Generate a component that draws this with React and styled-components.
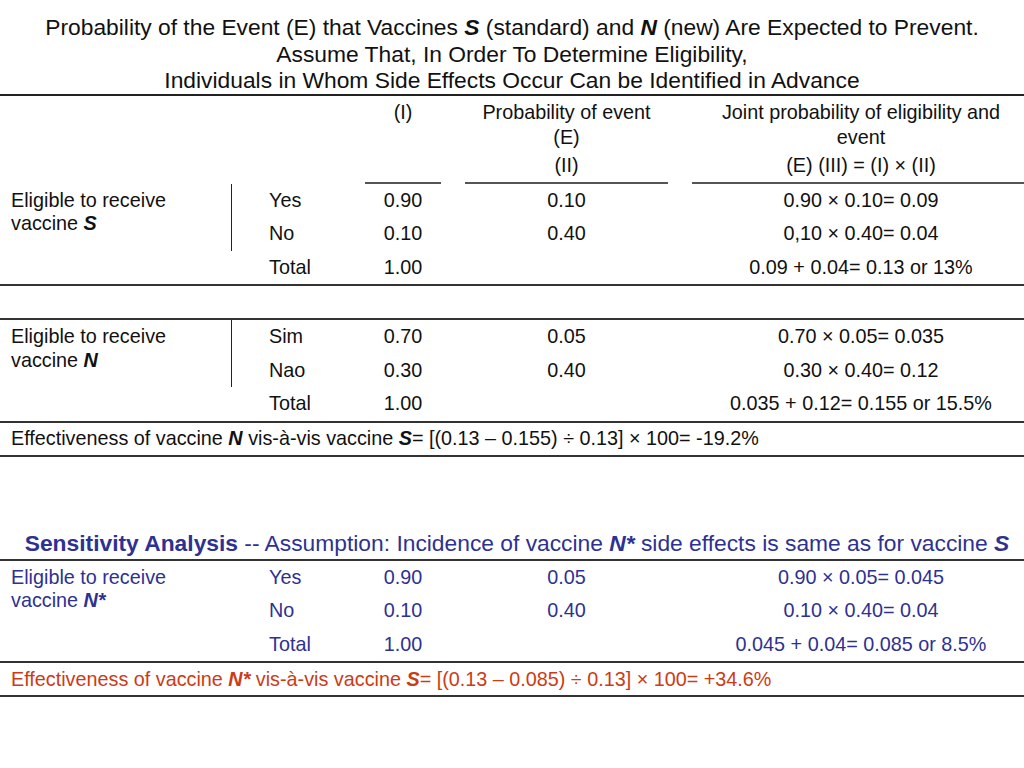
import styled, { createGlobalStyle } from 'styled-components';

const GlobalStyle = createGlobalStyle`
  body {
    margin: 0;
    background: #fff;
    font-family: 'Liberation Sans', Arial, sans-serif;
    color: #111;
  }
`;

const COLS = '232px 133px 76px 24px 203px 24px 1fr';
const BLUE = '#2e3192';
const RED = '#cc3b14';

const groups = [
  {
    label: 'S',
    divider: true,
    rows: [
      ['Yes', '0.90', '0.10', '0.90 × 0.10= 0.09'],
      ['No', '0.10', '0.40', '0,10 × 0.40= 0.04'],
      ['Total', '1.00', '', '0.09 + 0.04= 0.13 or 13%'],
    ],
  },
  {
    label: 'N',
    divider: true,
    rows: [
      ['Sim', '0.70', '0.05', '0.70 × 0.05= 0.035'],
      ['Nao', '0.30', '0.40', '0.30 × 0.40= 0.12'],
      ['Total', '1.00', '', '0.035 + 0.12= 0.155 or 15.5%'],
    ],
  },
];

const sensitivity = {
  label: 'N*',
  divider: false,
  rows: [
    ['Yes', '0.90', '0.05', '0.90 × 0.05= 0.045'],
    ['No', '0.10', '0.40', '0.10 × 0.40= 0.04'],
    ['Total', '1.00', '', '0.045 + 0.04= 0.085 or 8.5%'],
  ],
};

export default function App() {
  return (
    <>
      <GlobalStyle />
      <Page>
        <Title>
          Probability of the Event (E) that Vaccines <Em>S</Em> (standard) and <Em>N</Em> (new) Are
          Expected to Prevent.
          <br />
          Assume That, In Order To Determine Eligibility,
          <br />
          Individuals in Whom Side Effects Occur Can be Identified in Advance
        </Title>

        <HeaderGrid>
          <HeadCell $col={3}>
            <span>(I)</span>
          </HeadCell>
          <HeadCell $col={5}>
            <span>
              Probability of event
              <br />
              (E)
            </span>
            <Sub>(II)</Sub>
          </HeadCell>
          <HeadCell $col={7} $shift>
            <span>
              Joint probability of eligibility and
              <br />
              event
            </span>
            <Sub>(E) (III) = (I) × (II)</Sub>
          </HeadCell>
        </HeaderGrid>

        <Group data={groups[0]} />
        <Spacer />
        <Group data={groups[1]} />
        <EffectRow>
          Effectiveness of vaccine <Em>N</Em> vis-à-vis vaccine <Em>S</Em>= [(0.13 – 0.155) ÷ 0.13]
          × 100= -19.2%
        </EffectRow>

        <SensHeading>
          <b>Sensitivity Analysis</b> -- Assumption: Incidence of vaccine <Em>N*</Em> side effects
          is same as for vaccine <Em>S</Em>
        </SensHeading>
        <Group data={sensitivity} $tone={BLUE} />
        <EffectRow $tone={RED}>
          Effectiveness of vaccine <Em>N*</Em> vis-à-vis vaccine <Em>S</Em>= [(0.13 – 0.085) ÷
          0.13] × 100= +34.6%
        </EffectRow>
      </Page>
    </>
  );
}

function Group({ data, $tone }) {
  return (
    <GroupGrid $tone={$tone}>
      <Label $divider={data.divider}>
        Eligible to receive
        <br />
        vaccine <Em>{data.label}</Em>
      </Label>
      {data.rows.map((r, i) => (
        <Row key={i} row={r} index={i + 1} />
      ))}
    </GroupGrid>
  );
}

function Row({ row, index }) {
  const [name, p1, p2, joint] = row;
  return (
    <>
      <Name $row={index}>{name}</Name>
      <Num $row={index} $col={3}>{p1}</Num>
      <Num $row={index} $col={5}>{p2}</Num>
      <Num $row={index} $col={7} $shift>{joint}</Num>
    </>
  );
}

const Page = styled.div`
  width: 1024px;
  font-size: 19.8px;
`;

const Em = styled.b`
  font-style: italic;
  font-weight: bold;
`;

const Title = styled.h1`
  margin: 0;
  padding-top: 14px;
  padding-bottom: 0;
  font-size: 22.8px;
  font-weight: normal;
  line-height: 26.5px;
  text-align: center;
  color: #111;
  border-bottom: 2px solid #222;
`;

const HeaderGrid = styled.div`
  display: grid;
  grid-template-columns: ${COLS};
`;

const HeadCell = styled.div`
  grid-column: ${(p) => p.$col};
  display: flex;
  flex-direction: column;
  align-items: center;
  text-align: center;
  line-height: 25px;
  padding: 4.5px 0 3.5px ${(p) => (p.$shift ? '6px' : '0')};
  border-bottom: 2px solid #555;
`;

const Sub = styled.span`
  margin-top: 3px;
`;

const GroupGrid = styled.div`
  display: grid;
  grid-template-columns: ${COLS};
  grid-template-rows: repeat(3, 33.5px);
  color: ${(p) => p.$tone || '#111'};
  border-bottom: 2px solid #333;
`;

const Label = styled.div`
  grid-column: 1;
  grid-row: 1 / span 2;
  padding: 5px 0 0 11px;
  line-height: 23.5px;
  border-right: ${(p) => (p.$divider ? '1.5px solid #222' : 'none')};
`;

const Name = styled.div`
  grid-column: 2;
  grid-row: ${(p) => p.$row};
  display: flex;
  align-items: center;
  padding-left: 37px;
`;

const Num = styled.div`
  grid-column: ${(p) => p.$col};
  grid-row: ${(p) => p.$row};
  display: flex;
  align-items: center;
  justify-content: center;
  white-space: nowrap;
  padding-left: ${(p) => (p.$shift ? '6px' : '0')};
`;

const Spacer = styled.div`
  height: 32px;
  border-bottom: 2px solid #333;
`;

const EffectRow = styled.div`
  height: 32px;
  display: flex;
  align-items: center;
  padding-left: 11px;
  white-space: pre;
  color: ${(p) => p.$tone || '#111'};
  border-bottom: 2px solid #333;
`;

const SensHeading = styled.div`
  margin-top: 73px;
  padding: 0 0 3px 10px;
  font-size: 22.8px;
  line-height: 26px;
  text-align: center;
  white-space: nowrap;
  color: ${BLUE};
  border-bottom: 2px solid #333;
`;
